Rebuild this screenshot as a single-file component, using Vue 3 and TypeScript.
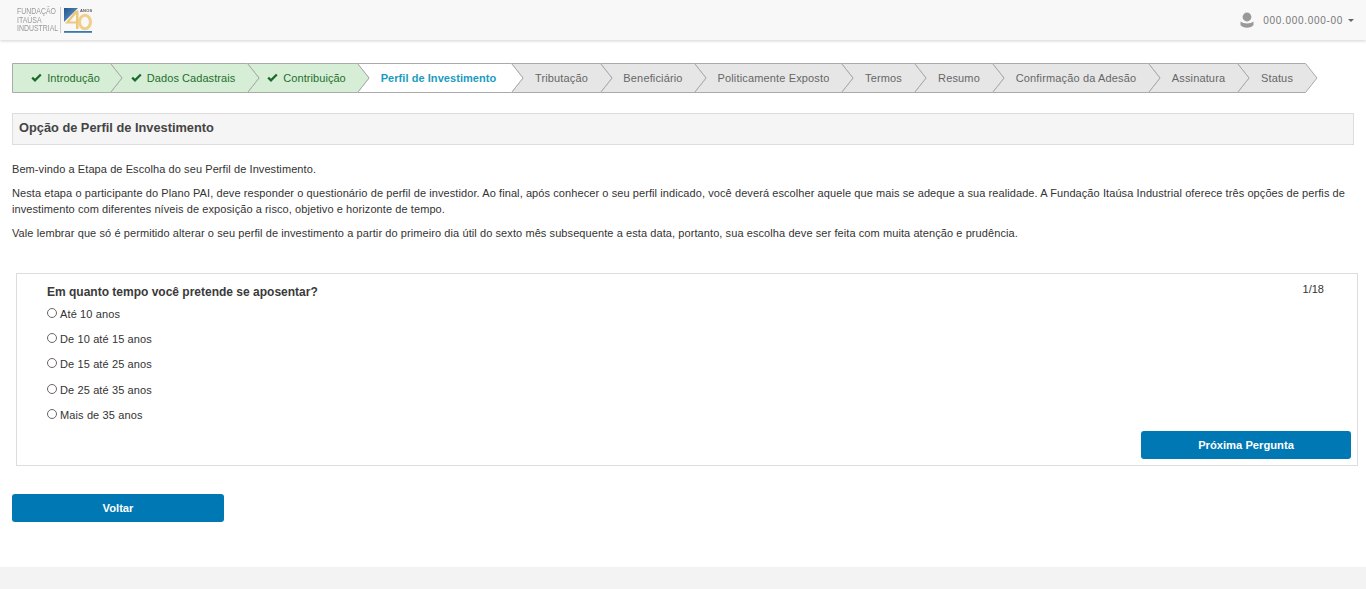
<script setup lang="ts">
type StepState = "done" | "current" | "todo";
interface Step {
  label: string;
  width: number;
  state: StepState;
}

const STEP_H = 30;
const TIP = 12;

const steps: Step[] = [
  { label: "Introdução", width: 98, state: "done" },
  { label: "Dados Cadastrais", width: 137, state: "done" },
  { label: "Contribuição", width: 110, state: "done" },
  { label: "Perfil de Investimento", width: 154, state: "current" },
  { label: "Tributação", width: 89, state: "todo" },
  { label: "Beneficiário", width: 94, state: "todo" },
  { label: "Politicamente Exposto", width: 147, state: "todo" },
  { label: "Termos", width: 73, state: "todo" },
  { label: "Resumo", width: 78, state: "todo" },
  { label: "Confirmação da Adesão", width: 156, state: "todo" },
  { label: "Assinatura", width: 89, state: "todo" },
  { label: "Status", width: 68, state: "todo" },
];

const options = [
  "Até 10 anos",
  "De 10 até 15 anos",
  "De 15 até 25 anos",
  "De 25 até 35 anos",
  "Mais de 35 anos",
];

function outline(w: number, first: boolean) {
  const left = first ? "" : ` L${TIP} ${STEP_H / 2}`;
  return `M0.5 0.5 H${w + 0.5} L${w + TIP} ${STEP_H / 2} L${w + 0.5} ${STEP_H - 0.5} H0.5${left} Z`;
}
</script>

<template>
  <div class="page">
    <header class="topbar">
      <div class="logo">
        <div class="logo-name">
          <span>FUNDAÇÃO</span>
          <span>ITAÚSA</span>
          <span>INDUSTRIAL</span>
        </div>
        <i class="logo-rule" />
        <svg class="logo-mark" width="29" height="27" viewBox="0 0 29 27">
          <defs>
            <linearGradient id="logoBlue" x1="0" y1="0" x2="1" y2="1">
              <stop offset="0" stop-color="#23558f" />
              <stop offset="1" stop-color="#6fa3cf" />
            </linearGradient>
          </defs>
          <path d="M0 1 H14 L0 15 Z" fill="url(#logoBlue)" />
          <path d="M11.5 3.5 L1 16.5 H12 V22 H14.5 V3.5 Z M5.5 14.5 L12 7 V14.5 Z" fill="#ecc77c" fill-rule="evenodd" />
          <ellipse cx="21" cy="15" rx="5.5" ry="6.8" fill="none" stroke="#f0cf8a" stroke-width="3" />
          <text x="16" y="4.5" class="logo-anos">ANOS</text>
          <rect x="0" y="24" width="28" height="1.8" fill="#3a78ad" />
        </svg>
      </div>
      <div class="user">
        <svg width="14" height="16" viewBox="0 0 14 16">
          <circle cx="7" cy="5" r="4.4" fill="#999" />
          <path d="M0.5 9.5 C3 12 11 12 13.5 9.5 V13 C11 16.5 3 16.5 0.5 13 Z" fill="#999" />
        </svg>
        <span class="user-id">000.000.000-00</span>
        <i class="caret" />
      </div>
    </header>

    <main class="content">
      <nav class="steps">
        <div
          v-for="(step, i) in steps"
          :key="step.label"
          class="step"
          :class="step.state"
          :style="{ width: step.width + 'px' }"
        >
          <svg class="step-bg" :width="step.width + TIP + 1" :height="STEP_H">
            <path :d="outline(step.width, i === 0)" />
          </svg>
          <span class="step-label">
            <svg v-if="step.state === 'done'" class="check" width="11" height="9" viewBox="0 0 11 9">
              <path d="M1.2 4.6 L4 7.3 L9.8 1.5" fill="none" stroke="#1a6b2a" stroke-width="2.3" />
            </svg>
            {{ step.label }}
          </span>
        </div>
      </nav>

      <h2 class="section-title">Opção de Perfil de Investimento</h2>

      <div class="intro">
        <p>Bem-vindo a Etapa de Escolha do seu Perfil de Investimento.</p>
        <p>
          Nesta etapa o participante do Plano PAI, deve responder o questionário de perfil de investidor. Ao final, após
          conhecer o seu perfil indicado, você deverá escolher aquele que mais se adeque a sua realidade. A Fundação Itaúsa
          Industrial oferece três opções de perfis de investimento com diferentes níveis de exposição a risco, objetivo e
          horizonte de tempo.
        </p>
        <p>
          Vale lembrar que só é permitido alterar o seu perfil de investimento a partir do primeiro dia útil do sexto mês
          subsequente a esta data, portanto, sua escolha deve ser feita com muita atenção e prudência.
        </p>
      </div>

      <section class="question">
        <div class="question-head">
          <h3>Em quanto tempo você pretende se aposentar?</h3>
          <span class="counter">1/18</span>
        </div>
        <label v-for="opt in options" :key="opt" class="option">
          <input type="radio" name="q1" />
          <span>{{ opt }}</span>
        </label>
        <div class="question-foot">
          <button class="btn next" type="button">Próxima Pergunta</button>
        </div>
      </section>

      <button class="btn back" type="button">Voltar</button>
    </main>

    <footer class="footer" />
  </div>
</template>

<style scoped>
.page {
  min-height: 589px;
  display: flex;
  flex-direction: column;
  font-family: "Liberation Sans", Arial, sans-serif;
  font-size: 11px;
  color: #333;
  background: #fff;
}

.topbar {
  height: 40px;
  flex: none;
  display: flex;
  align-items: center;
  justify-content: space-between;
  padding: 0 12px 0 17px;
  background: #f8f8f8;
  box-shadow: 0 1px 3px rgba(0, 0, 0, 0.18);
}
.logo {
  display: flex;
  align-items: center;
  height: 40px;
  filter: blur(0.35px);
}
.logo-name {
  display: flex;
  flex-direction: column;
  width: 42px;
  font-size: 9.5px;
  line-height: 8.7px;
  color: #999;
  white-space: nowrap;
}
.logo-name span {
  transform: scaleX(0.73);
  transform-origin: left center;
}
.logo-rule {
  width: 1px;
  height: 26px;
  margin: 0 3px 0 1px;
  background: #ccc;
}
.logo-anos {
  font-size: 4px;
  font-weight: bold;
  letter-spacing: 0.2px;
  fill: #555;
}
.user {
  display: flex;
  align-items: center;
  color: #777;
  font-size: 10px;
  letter-spacing: 0.7px;
}
.user-id {
  margin-left: 9px;
}
.caret {
  width: 0;
  height: 0;
  margin-left: 5px;
  border-top: 3px solid #666;
  border-left: 3px solid transparent;
  border-right: 3px solid transparent;
}

.content {
  flex: 1;
  padding: 23px 12px 0;
}

.steps {
  display: flex;
  height: 30px;
}
.step {
  position: relative;
  flex: none;
  height: 30px;
  display: flex;
  align-items: center;
  justify-content: center;
  padding-left: 12px;
  box-sizing: border-box;
  font-size: 11px;
  letter-spacing: 0.15px;
}
.step.done,
.step.current {
  padding-left: 9px;
  letter-spacing: 0.06px;
}
.step-bg {
  position: absolute;
  left: 0;
  top: 0;
}
.step-bg path {
  stroke: #aaa;
  stroke-width: 1;
  fill: #e6e6e6;
}
.step.done .step-bg path {
  fill: #d6eed5;
}
.step.current .step-bg path {
  fill: #fff;
}
.step:nth-child(1) { z-index: 12; }
.step:nth-child(2) { z-index: 11; }
.step:nth-child(3) { z-index: 10; }
.step:nth-child(4) { z-index: 9; }
.step:nth-child(5) { z-index: 8; }
.step:nth-child(6) { z-index: 7; }
.step:nth-child(7) { z-index: 6; }
.step:nth-child(8) { z-index: 5; }
.step:nth-child(9) { z-index: 4; }
.step:nth-child(10) { z-index: 3; }
.step:nth-child(11) { z-index: 2; }
.step-label {
  position: relative;
  white-space: nowrap;
  color: #666;
}
.step.done .step-label {
  color: #1f6f2e;
}
.step.current .step-label {
  color: #1a9cc0;
  font-weight: bold;
}
.check {
  margin-right: 2px;
}

.section-title {
  margin: 20px 0 0;
  height: 32px;
  box-sizing: border-box;
  line-height: 28px;
  padding-left: 6px;
  border: 1px solid #ddd;
  background: #f5f5f5;
  font-size: 12.8px;
  font-weight: bold;
  color: #444;
}

.intro {
  margin-top: 16px;
}
.intro p {
  margin: 0 0 8px;
  font-size: 11px;
  line-height: 16px;
  letter-spacing: 0.085px;
}

.question {
  margin: 32px -4px 0 4px;
  height: 193px;
  box-sizing: border-box;
  padding: 11px 30px 6px;
  border: 1px solid #ddd;
  display: flex;
  flex-direction: column;
}
.question-head {
  flex: none;
  display: flex;
  justify-content: space-between;
  height: 22px;
}
.question-head h3 {
  margin: 0;
  font-size: 12px;
  font-weight: bold;
  line-height: 15px;
  color: #3a3a3a;
}
.counter {
  font-size: 11px;
  line-height: 8px;
  margin-right: 3px;
}
.option {
  flex: none;
  height: 25.2px;
  display: flex;
  align-items: flex-start;
  font-size: 11px;
}
.option:last-of-type {
  height: 18px;
}
.option input {
  appearance: none;
  width: 10px;
  height: 10px;
  margin: 1px 3px 0 0;
  border: 1px solid #666;
  border-radius: 50%;
  background: #fff;
}
.option span {
  line-height: 14px;
  letter-spacing: 0.12px;
}
.question-foot {
  flex: none;
  margin-top: auto;
  display: flex;
  justify-content: flex-end;
  margin-right: -24px;
}

.btn {
  border: 0;
  border-radius: 3px;
  background: #0078b4;
  color: #fff;
  font-family: inherit;
  font-size: 11.2px;
  font-weight: bold;
  height: 28px;
  padding: 0;
}
.btn.next {
  width: 210px;
}
.btn.back {
  display: block;
  width: 212px;
  margin-top: 28px;
}

.footer {
  flex: none;
  height: 22px;
  background: #f3f3f3;
}
</style>

<style>
body {
  margin: 0;
}
</style>
